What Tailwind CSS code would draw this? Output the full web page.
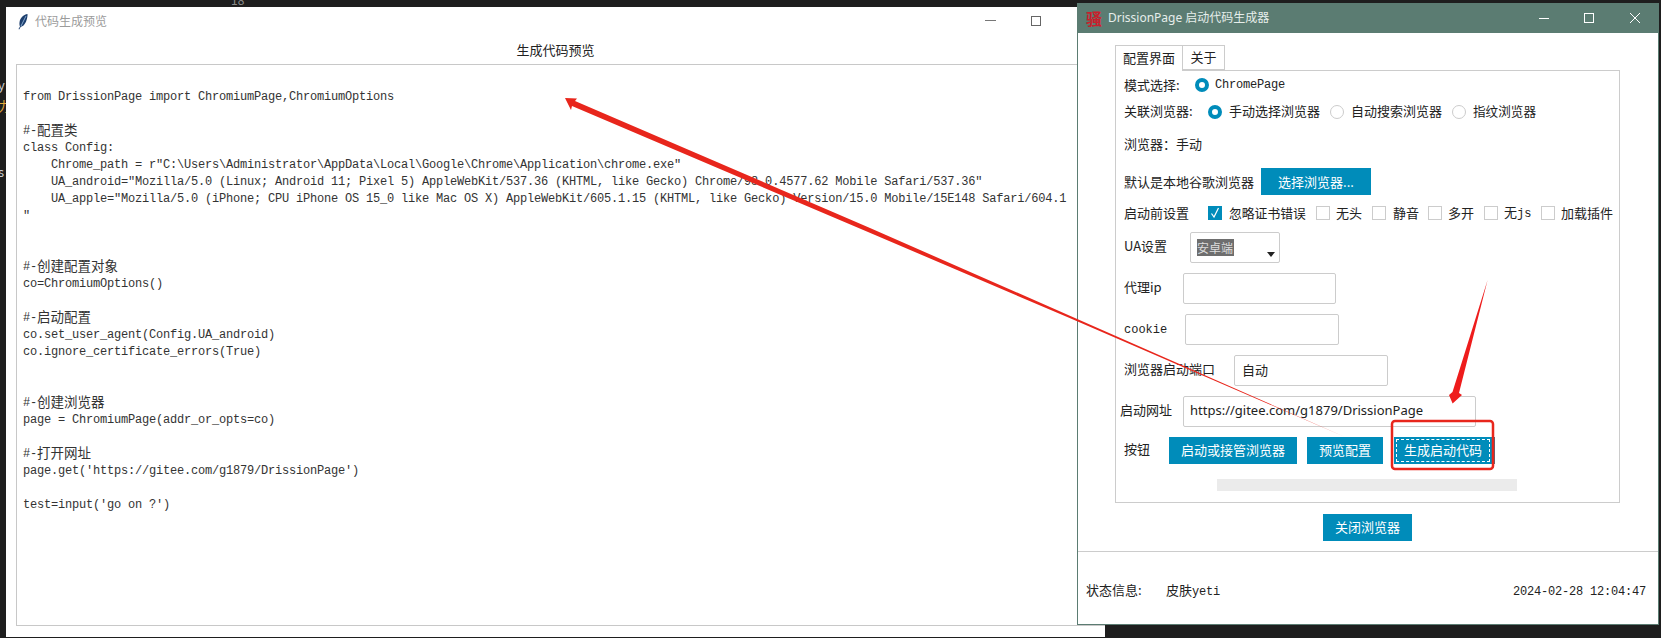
<!DOCTYPE html>
<html lang="zh-CN">
<head>
  <meta charset="UTF-8" />
  <title>DrissionPage 启动代码生成器</title>
  <script src="https://cdn.jsdelivr.net/npm/@tailwindcss/browser@4"></script>
</head>
<body class="relative w-[1661px] h-[638px] overflow-hidden bg-[#1e1e1e] font-['Noto_Sans_CJK_SC','Noto_Sans',sans-serif] text-[13px] text-[#222]">

  <!-- editor behind the windows -->
  <div class="absolute left-[231px] top-[-9px] text-[12px] text-[#8a8a8a]">18</div>
  <div class="absolute left-[-2px] top-[76px] flex flex-col text-[13px] leading-[17px]">
    <span class="text-[#cfcfcf]">y</span>
    <span class="mt-[4px] text-[#e2a93b]">力</span>
    <span class="mt-[49px] text-[#cfcfcf]">s</span>
  </div>

  <!-- preview window -->
  <div class="absolute left-[6px] top-[7px] w-[1099px] h-[630px] bg-white flex flex-col">
    <div class="h-[28px] flex items-center relative">
      <svg class="ml-[11px] w-[12px] h-[17px]" viewBox="0 0 12 17">
        <path d="M10.5 1C6.5 1.5 3 5 2.5 9.5c-.2 1.5 0 3 .5 4L1.5 16l.7.4 1.6-2.6c2.6-.3 4.8-3.4 5.7-6.5C10.2 5 10.7 3 10.5 1z" fill="#1d3f6e" />
        <path d="M9 3 4 13" stroke="#9fc3e6" stroke-width="0.8" />
      </svg>
      <span class="ml-[6px] text-[12px] text-[#9b9b9b]">代码生成预览</span>
      <div class="absolute left-[979px] top-[13px] w-[11px] h-px bg-[#777]"></div>
      <div class="absolute left-[1025px] top-[9px] w-[10px] h-[10px] border border-[#666]"></div>
    </div>
    <div class="h-[29px] flex items-center justify-center text-[13px] text-[#222]">生成代码预览</div>
    <pre class="ml-[10px] h-[562px] border border-[#c8c8c8] pl-[6px] pt-[7px] font-['Liberation_Mono','Noto_Sans_CJK_SC',monospace] text-[12px] leading-[17px] tracking-[-0.2px] text-[#333] overflow-hidden">

from DrissionPage import ChromiumPage,ChromiumOptions

#-<span class="inline-block align-top h-[17px] text-[13.5px] tracking-normal leading-[17px]">配置类</span>
class Config:
    Chrome_path = r"C:\Users\Administrator\AppData\Local\Google\Chrome\Application\chrome.exe"
    UA_android="Mozilla/5.0 (Linux; Android 11; Pixel 5) AppleWebKit/537.36 (KHTML, like Gecko) Chrome/98.0.4577.62 Mobile Safari/537.36"
    UA_apple="Mozilla/5.0 (iPhone; CPU iPhone OS 15_0 like Mac OS X) AppleWebKit/605.1.15 (KHTML, like Gecko) Version/15.0 Mobile/15E148 Safari/604.1
"


#-<span class="inline-block align-top h-[17px] text-[13.5px] tracking-normal leading-[17px]">创建配置对象</span>
co=ChromiumOptions()

#-<span class="inline-block align-top h-[17px] text-[13.5px] tracking-normal leading-[17px]">启动配置</span>
co.set_user_agent(Config.UA_android)
co.ignore_certificate_errors(True)


#-<span class="inline-block align-top h-[17px] text-[13.5px] tracking-normal leading-[17px]">创建浏览器</span>
page = ChromiumPage(addr_or_opts=co)

#-<span class="inline-block align-top h-[17px] text-[13.5px] tracking-normal leading-[17px]">打开网址</span>
page.get('https://gitee.com/g1879/DrissionPage')

test=input('go on ?')</pre>
  </div>

  <!-- generator window -->
  <div class="absolute left-[1077px] top-[3px] w-[582px] h-[622px] bg-white border border-t-0 border-[#5b7c72] flex flex-col">
    <div class="h-[30px] -mx-px bg-[#5b7c72] flex items-center shrink-0 relative">
      <span class="ml-[9px] w-[16px] text-[16px] leading-[16px] font-bold text-[#c8202c] font-['Noto_Sans_CJK_SC',serif]">骚</span>
      <span class="ml-[6px] text-[12px] text-[#e6eeeb] font-['Noto_Sans','Noto_Sans_CJK_SC',sans-serif]">DrissionPage 启动代码生成器</span>
      <div class="absolute left-[462px] top-[15px] w-[10px] h-px bg-white"></div>
      <div class="absolute left-[507px] top-[10px] w-[10px] h-[10px] border border-white"></div>
      <svg class="absolute left-[553px] top-[10px] w-[10px] h-[10px]" viewBox="0 0 10 10"><path d="M0 0l10 10M10 0L0 10" stroke="#fff" stroke-width="1" /></svg>
    </div>

    <!-- notebook tabs -->
    <div class="ml-[37px] mt-[12px] flex h-[25px] text-[#222]">
      <div class="w-[68px] h-[26px] pb-[2px] border border-[#ccc] border-b-0 bg-white flex items-center justify-center z-10">配置界面</div>
      <div class="w-[42px] h-[25px] pb-[2px] border border-l-0 border-[#ccc] flex items-center justify-center">关于</div>
    </div>

    <!-- panel -->
    <div class="ml-[37px] w-[505px] h-[433px] border border-[#ccc] pl-[8px] flex flex-col">
      <div class="h-[28px] flex items-center">
        <span class="w-[66px]">模式选择:</span>
        <span class="ml-[5px] w-[14px] h-[14px] rounded-full border-[4px] border-[#008cba]"></span>
        <span class="ml-[6px] font-['Liberation_Mono',monospace] text-[12px] tracking-[-0.2px]">ChromePage</span>
      </div>
      <div class="h-[26px] flex items-center">
        <span class="w-[84px] pb-[2px]">关联浏览器:</span>
        <span class="w-[14px] h-[14px] rounded-full border-[4px] border-[#008cba]"></span>
        <span class="ml-[7px] w-[91px] pb-[2px]">手动选择浏览器</span>
        <span class="ml-[10px] w-[14px] h-[14px] rounded-full border border-[#ccc]"></span>
        <span class="ml-[7px] w-[91px] pb-[2px]">自动搜索浏览器</span>
        <span class="ml-[10px] w-[14px] h-[14px] rounded-full border border-[#ccc]"></span>
        <span class="ml-[7px] pb-[2px] text-[12.6px]">指纹浏览器</span>
      </div>
      <div class="h-[38px] flex items-center">浏览器：手动</div>
      <div class="mt-[5px] h-[27px] flex items-center">
        <span class="w-[137px]">默认是本地谷歌浏览器</span>
        <button class="w-[110px] h-[27px] bg-[#008cba] text-white text-center">选择浏览器...</button>
      </div>
      <div class="h-[35px] flex items-center">
        <span class="w-[84px]">启动前设置</span>
        <span class="w-[14px] h-[14px] bg-[#008cba] flex items-center justify-center">
          <svg class="w-[10px] h-[11px]" viewBox="0 0 10 11"><path d="M1.5 6.5 4 10l4.5-9" fill="none" stroke="#fff" stroke-width="1.2" /></svg>
        </span>
        <span class="ml-[7px] w-[87px] text-[12.8px]">忽略证书错误</span>
        <span class="w-[14px] h-[14px] border border-[#ccc]"></span>
        <span class="ml-[6px] w-[36px]">无头</span>
        <span class="w-[14px] h-[14px] border border-[#ccc]"></span>
        <span class="ml-[7px] w-[35px]">静音</span>
        <span class="w-[14px] h-[14px] border border-[#ccc]"></span>
        <span class="ml-[6px] w-[36px]">多开</span>
        <span class="w-[14px] h-[14px] border border-[#ccc]"></span>
        <span class="ml-[6px] w-[37px]">无<span class="font-['Liberation_Mono',monospace] text-[12px]">js</span></span>
        <span class="w-[14px] h-[14px] border border-[#ccc]"></span>
        <span class="ml-[6px]">加载插件</span>
      </div>
      <div class="mt-[2px] h-[31px] flex items-center">
        <span class="w-[66px] pb-[3px]">UA设置</span>
        <div class="relative w-[90px] h-[31px] border border-[#ccc] rounded-[2px] pl-[6px] pt-[6px]">
          <span class="block w-[37px] h-[17px] bg-[#6e6e6e] text-[#ddd] text-[12px] leading-[17px] whitespace-nowrap">安卓端</span>
          <span class="absolute right-[4px] bottom-[5px] border-x-[4px] border-t-[5px] border-x-transparent border-t-[#222]"></span>
        </div>
      </div>
      <div class="mt-[10px] h-[31px] flex items-center">
        <span class="w-[59px] pb-[3px]">代理ip</span>
        <div class="w-[153px] h-[31px] border border-[#ccc] rounded-[2px]"></div>
      </div>
      <div class="mt-[10px] h-[31px] flex items-center">
        <span class="w-[61px] font-['Liberation_Mono',monospace] text-[12px]">cookie</span>
        <div class="w-[154px] h-[31px] border border-[#ccc] rounded-[2px]"></div>
      </div>
      <div class="mt-[10px] h-[31px] flex items-center">
        <span class="w-[110px] pb-[3px]">浏览器启动端口</span>
        <div class="w-[154px] h-[31px] border border-[#ccc] rounded-[2px] pl-[7px] pb-[2px] flex items-center">自动</div>
      </div>
      <div class="mt-[10px] h-[31px] flex items-center -ml-[4px]">
        <span class="w-[63px] pb-[3px]">启动网址</span>
        <div class="w-[293px] h-[31px] border border-[#ccc] rounded-[2px] pl-[6px] pb-[2px] flex items-center font-['Noto_Sans',sans-serif]">https://gitee.com/g1879/DrissionPage</div>
      </div>
      <div class="mt-[10px] h-[27px] flex items-center text-white">
        <span class="w-[45px] pb-[3px] text-[#222]">按钮</span>
        <button class="w-[128px] h-[27px] pb-[2px] bg-[#008cba]">启动或接管浏览器</button>
        <button class="ml-[10px] w-[76px] h-[27px] pb-[2px] bg-[#008cba]">预览配置</button>
        <button class="ml-[11px] w-[101px] h-[27px] bg-[#008cba] border-r-[2px] border-[#4f6b7c] p-[2px] pr-[3px]">
          <span class="flex items-center justify-center w-full h-full pb-[2px] border border-dashed border-white">生成启动代码</span>
        </button>
      </div>
      <div class="mt-[15px] ml-[93px] w-[300px] h-[12px] bg-[#ebebeb]"></div>
    </div>

    <div class="mt-[11px] self-center w-[89px] h-[27px] ml-[-1px] pb-[2px] bg-[#008cba] text-white flex items-center justify-center">关闭浏览器</div>
    <div class="mt-[10px] border-t border-[#ccc] flex-1 flex items-end justify-between pb-[23px] pl-[8px] pr-[12px] text-[#222]">
      <div class="flex">
        <span class="w-[80px]">状态信息:</span>
        <span>皮肤<span class="font-['Liberation_Mono',monospace] text-[12px] tracking-[-0.2px]">yeti</span></span>
      </div>
      <span class="font-['Liberation_Mono',monospace] text-[12px] tracking-[-0.2px]">2024-02-28 12:04:47</span>
    </div>
  </div>

  <!-- red annotations drawn over the screenshot -->
  <svg class="absolute left-0 top-0 w-[1661px] h-[638px] pointer-events-none" viewBox="0 0 1661 638">
    <polygon points="565,98 577,98.5 575,101 870,228 1070.4,316 1345,437 1069.6,318 868,232 572,106 571,110" fill="#e8261c" />
    <polygon points="1487.6,280 1459,393 1462,395 1452.6,403.5 1449,395 1452.5,392" fill="#ee1c1c" />
    <rect x="1392" y="421" width="101" height="48" rx="3" fill="none" stroke="#e8261c" stroke-width="2.5" />
  </svg>
</body>
</html>
